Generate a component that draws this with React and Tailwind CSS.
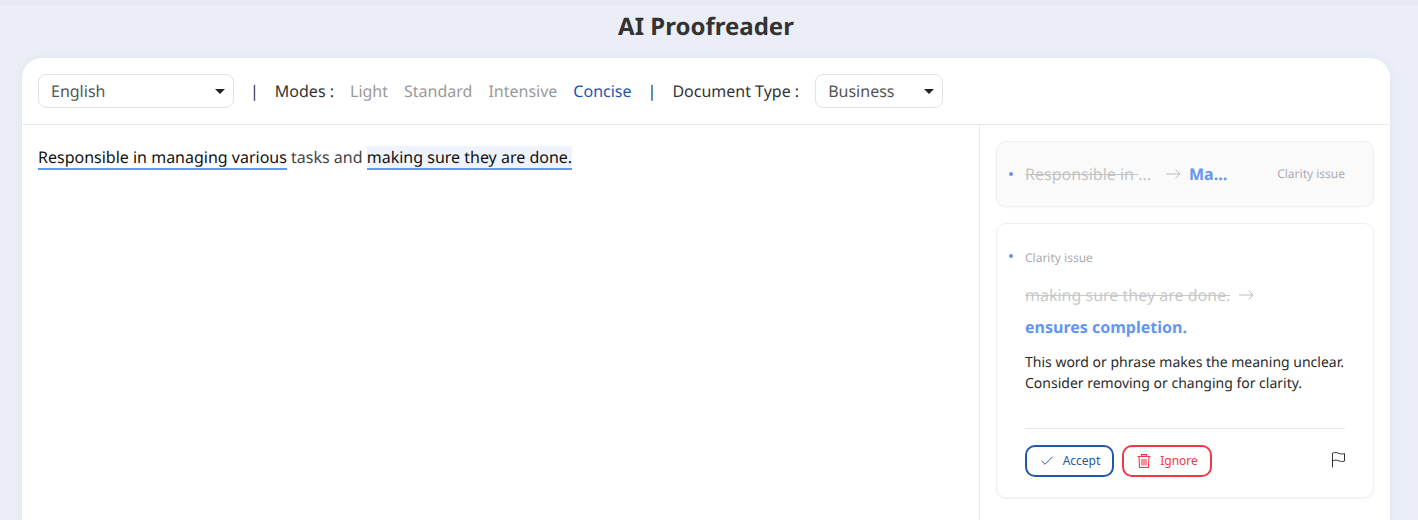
import { Check } from 'lucide-react';

const Caret = () => (
  <svg width="10" height="5" viewBox="0 0 10 5" className="text-[#222]">
    <path d="M0 0h10L5 5z" fill="currentColor" />
  </svg>
);

const ArrowIcon = ({ className = '' }) => (
  <svg width="15" height="10" viewBox="0 0 15 10" fill="none" stroke="#bbb" strokeWidth="1" className={`shrink-0 ${className}`}>
    <path d="M0 5h14M9.500 .7L14 5 9.500 9.300" />
  </svg>
);

const TrashIcon = () => (
  <svg width="16" height="16" viewBox="0 0 16 16" fill="none" stroke="currentColor" strokeWidth="1.1">
    <path d="M1.500 3.500h13M5.500 3.300V1.600h5v1.700M3 3.500l.5 11h9l.5-11M6 6v6.500M8 6v6.500M10 6v6.500" />
  </svg>
);

const FlagIcon = () => (
  <svg width="15" height="17" viewBox="0 0 15 17" fill="none" stroke="#333" strokeWidth="1">
    <path d="M1.500 16.500V2.200C4 1 6 1.600 8 2.400c2 .7 3.600 .9 5.500 .1v7.600c-2 .6-3.600 .5-5.500-.2-2-.8-4-1.200-6.500 0" />
  </svg>
);

const Select = ({ label, className }) => (
  <div className={`h-[34px] flex items-center justify-between pl-3 pr-[8px] border border-[#e2e2e2] rounded-lg text-[#555] ${className}`}>
    <span>{label}</span>
    <Caret />
  </div>
);

const Dot = ({ className = '' }) => <span className={`w-1 h-1 rounded-full bg-[#6296f0] shrink-0 ${className}`}></span>;

export default function App() {
  return (
    <div className="h-[520px] overflow-hidden bg-[#ebeef6] pr-[6px] font-['Noto_Sans',sans-serif] [text-rendering:geometricPrecision]">
      <div className="h-[5px] bg-[#e6e9f2] -mr-[6px]"></div>
      <h1 className="h-[44px] flex items-center justify-center text-2xl font-bold text-[#333]">AI Proofreader</h1>
      <div className="mx-[22px] mt-[9px] h-[520px] bg-white rounded-[20px] shadow-[0_0_8px_rgba(90,110,160,0.08)]">
        <div className="h-[67px] px-4 flex items-center border-b border-[#e9e9ec] text-base text-[#333]">
          <Select label="English" className="w-[196px]" />
          <span className="ml-4">|</span>
          <span className="ml-4">Modes :</span>
          <span className="ml-4 text-[#999]">Light</span>
          <span className="ml-4 text-[#999]">Standard</span>
          <span className="ml-4 text-[#999]">Intensive</span>
          <span className="ml-4 text-[#1f55b0]">Concise</span>
          <span className="ml-4">|</span>
          <span className="ml-4">Document Type :</span>
          <Select label="Business" className="w-[128px] ml-4" />
        </div>
        <div className="flex">
          <div className="w-[958px] h-[400px] border-r border-[#e9e9ec] pl-4 pt-[20px] text-base text-[#444] leading-[24px]">
            <span className="inline-block text-[#111] border-b-2 border-[#6296f0] leading-[22px]">Responsible in managing various</span>
            {' tasks and '}
            <span className="inline-block text-[#111] bg-[#eff3fc] border-b-2 border-[#6296f0] leading-[22px]">making sure they are done.</span>
          </div>
          <div className="flex-1 pt-4 pl-4 pr-4 flex flex-col gap-4">
            <div className="h-[66px] rounded-[10px] border border-[#efefef] bg-[#fafafa] shadow-[0_1px_2px_rgba(0,0,0,0.03)] pl-3 pr-7 flex items-center">
              <Dot />
              <span className="ml-[12px] w-[126px] text-base text-[#c4c4c4] whitespace-pre flex">
                <span className="line-through">Responsible in </span>
                <span>...</span>
              </span>
              <ArrowIcon className="ml-[15px]" />
              <span className="ml-[8px] text-base font-bold text-[#6296f0]">Ma...</span>
              <span className="ml-auto text-xs text-[#aaaab2]">Clarity issue</span>
            </div>
            <div className="h-[275px] rounded-[10px] border border-[#efefef] shadow-[0_1px_3px_rgba(0,0,0,0.05)] pt-[24px] pl-3 pr-7 flex flex-col">
              <div className="flex items-center h-[20px]">
                <Dot className="mb-1" />
                <span className="ml-[12px] text-xs text-[#aaaab2]">Clarity issue</span>
              </div>
              <div className="pl-4 mt-[15px]">
                <div className="flex items-center h-[24px]">
                  <span className="text-base text-[#c8c8c8] line-through whitespace-nowrap">making sure they are done.</span>
                  <ArrowIcon className="ml-[9px]" />
                </div>
                <div className="mt-[8px] h-[24px] leading-[24px] text-base font-bold text-[#6296f0]">ensures completion.</div>
                <p className="mt-[13px] text-sm leading-[21px] text-[#2b2b2b] whitespace-nowrap">
                  This word or phrase makes the meaning unclear.<br />Consider removing or changing for clarity.
                </p>
                <div className="mt-[34px] pt-4 border-t border-[#e9e9ec] flex items-center">
                  <button className="w-[89px] h-8 rounded-[10px] border-2 border-[#2358a8] text-[#2358a8] text-xs flex items-center justify-center gap-2">
                    <Check size={16} strokeWidth={1.5} />
                    Accept
                  </button>
                  <button className="ml-2 w-[90px] h-8 rounded-[10px] border-2 border-[#ee3a44] text-[#ee3a44] text-xs flex items-center justify-center gap-2">
                    <TrashIcon />
                    Ignore
                  </button>
                  <span className="ml-auto mr-[-1px] mt-[-3px] flex"><FlagIcon /></span>
                </div>
              </div>
            </div>
          </div>
        </div>
      </div>
    </div>
  );
}
